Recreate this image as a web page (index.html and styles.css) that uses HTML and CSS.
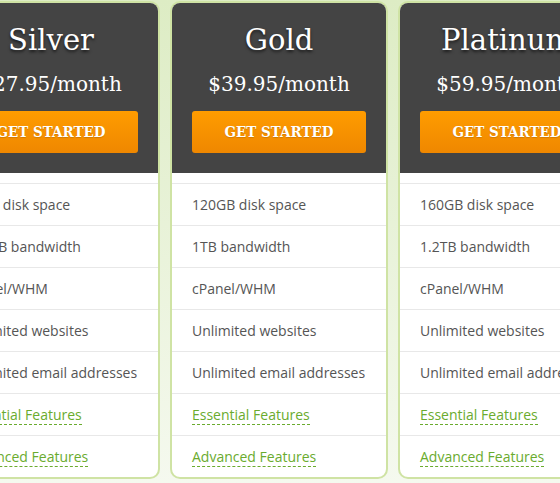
FILE: index.html
```html
<!DOCTYPE html>
<html>
<head>
<meta charset="utf-8">
<link rel="stylesheet" href="styles.css">
</head>
<body>
<div class="plans">
  <div class="plan">
    <div class="plan-head">
      <h2 class="plan-name">Silver</h2>
      <div class="plan-price">$27.95/month</div>
      <a class="plan-btn">GET STARTED</a>
    </div>
    <ul class="plan-features">
      <li>80GB disk space</li>
      <li>800GB bandwidth</li>
      <li>cPanel/WHM</li>
      <li>Unlimited websites</li>
      <li>Unlimited email addresses</li>
      <li><a class="feat-link">Essential Features</a></li>
      <li><a class="feat-link">Advanced Features</a></li>
    </ul>
  </div>
  <div class="plan">
    <div class="plan-head">
      <h2 class="plan-name">Gold</h2>
      <div class="plan-price">$39.95/month</div>
      <a class="plan-btn">GET STARTED</a>
    </div>
    <ul class="plan-features">
      <li>120GB disk space</li>
      <li>1TB bandwidth</li>
      <li>cPanel/WHM</li>
      <li>Unlimited websites</li>
      <li>Unlimited email addresses</li>
      <li><a class="feat-link">Essential Features</a></li>
      <li><a class="feat-link">Advanced Features</a></li>
    </ul>
  </div>
  <div class="plan">
    <div class="plan-head">
      <h2 class="plan-name">Platinum</h2>
      <div class="plan-price">$59.95/month</div>
      <a class="plan-btn">GET STARTED</a>
    </div>
    <ul class="plan-features">
      <li>160GB disk space</li>
      <li>1.2TB bandwidth</li>
      <li>cPanel/WHM</li>
      <li>Unlimited websites</li>
      <li>Unlimited email addresses</li>
      <li><a class="feat-link">Essential Features</a></li>
      <li><a class="feat-link">Advanced Features</a></li>
    </ul>
  </div>
</div>
</body>
</html>
```
FILE: styles.css
```css
html, body {
  margin: 0;
  padding: 0;
  height: 100%;
  overflow: hidden;
}
body {
  background: linear-gradient(#ddecc4, #f5f9ef);
  font-family: "Open Sans", sans-serif;
}
.plans {
  display: flex;
  gap: 10px;
  padding-top: 1px;
  margin-left: -58px;
  width: 800px;
}
.plan {
  flex: 0 0 214px;
  border: 2px solid #cfe3a4;
  border-radius: 10px;
  background: #fff;
  overflow: hidden;
}
.plan-head {
  background: #444;
  padding: 17px 20px 20px;
  text-align: center;
  color: #fff;
}
.plan-name {
  margin: 0;
  font-family: "DejaVu Serif", serif;
  font-weight: normal;
  font-size: 29px;
  line-height: 40px;
  text-shadow: 0 2px 3px rgba(0,0,0,0.6);
}
.plan-price {
  margin-top: 10px;
  font-family: "DejaVu Serif", serif;
  font-size: 20px;
  line-height: 28px;
}
.plan-btn {
  display: block;
  margin-top: 13px;
  height: 42px;
  line-height: 42px;
  border-radius: 3px;
  background: linear-gradient(#ff9c00, #ef8700);
  color: #fff;
  font-family: "DejaVu Serif Condensed", "DejaVu Serif", serif;
  font-stretch: condensed;
  font-weight: bold;
  font-size: 15px;
  text-shadow: 0 1px 1px rgba(0,0,0,0.15);
}
.plan-features {
  list-style: none;
  margin: 0;
  padding: 10px 0 0;
}
.plan-features li {
  border-top: 1px solid #e8e8e8;
  height: 41px;
  line-height: 41px;
  padding: 0 20px;
  font-size: 14px;
  color: #555;
  white-space: nowrap;
}
.feat-link {
  color: #6aab2e;
  border-bottom: 1px dashed #6aab2e;
  display: inline-block;
  line-height: 19px;
}
```
